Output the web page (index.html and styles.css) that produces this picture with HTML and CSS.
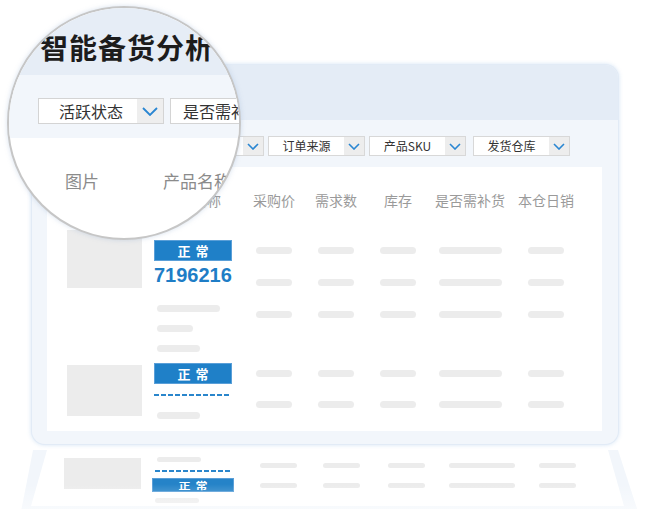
FILE: index.html
```html
<!DOCTYPE html>
<html lang="zh-CN">
<head>
<meta charset="utf-8">
<title>智能备货分析</title>
<link rel="stylesheet" href="styles.css">
</head>
<body>
<div class="scene">
  <div class="screen">
    <div class="screen-head"></div>
    <div class="screen-body">
      <div class="filters">
        <div class="filter"><span class="filter-label">活跃状态</span><span class="filter-arrow"><svg width="12" height="7" viewBox="0 0 12 7"><path d="M1 1l5 5 5-5" fill="none" stroke="#2a86d2" stroke-width="1.6"/></svg></span></div>
        <div class="filter"><span class="filter-label">是否需补货</span><span class="filter-arrow"><svg width="12" height="7" viewBox="0 0 12 7"><path d="M1 1l5 5 5-5" fill="none" stroke="#2a86d2" stroke-width="1.6"/></svg></span></div>
        <div class="filter"><span class="filter-label">订单来源</span><span class="filter-arrow"><svg width="12" height="7" viewBox="0 0 12 7"><path d="M1 1l5 5 5-5" fill="none" stroke="#2a86d2" stroke-width="1.6"/></svg></span></div>
        <div class="filter"><span class="filter-label">产品SKU</span><span class="filter-arrow"><svg width="12" height="7" viewBox="0 0 12 7"><path d="M1 1l5 5 5-5" fill="none" stroke="#2a86d2" stroke-width="1.6"/></svg></span></div>
        <div class="filter filter--last"><span class="filter-label">发货仓库</span><span class="filter-arrow"><svg width="12" height="7" viewBox="0 0 12 7"><path d="M1 1l5 5 5-5" fill="none" stroke="#2a86d2" stroke-width="1.6"/></svg></span></div>
      </div>
      <div class="table">
        <div class="trow thead">
          <div class="th th-img">图片</div>
          <div class="th th-name">产品名称</div>
          <div class="th">采购价</div>
          <div class="th">需求数</div>
          <div class="th">库存</div>
          <div class="th">是否需补货</div>
          <div class="th">本仓日销</div>
        </div>
        <div class="trow row-one">
          <div class="thumb thumb--tall"></div>
          <div class="product product--first">
            <div class="badge">正常</div>
            <div class="sku">7196216</div>
            <div class="pbar pbar--long pbar--after-sku"></div>
            <div class="pbar pbar--short pbar--next"></div>
            <div class="pbar pbar--mid pbar--next"></div>
          </div>
          <div class="bars bars--one"><i class="bar"></i><i class="bar"></i><i class="bar"></i></div>
          <div class="bars bars--one"><i class="bar"></i><i class="bar"></i><i class="bar"></i></div>
          <div class="bars bars--one"><i class="bar"></i><i class="bar"></i><i class="bar"></i></div>
          <div class="bars bars--one"><i class="bar bar--wide"></i><i class="bar bar--wide"></i><i class="bar bar--wide"></i></div>
          <div class="bars bars--one"><i class="bar"></i><i class="bar"></i><i class="bar"></i></div>
        </div>
        <div class="trow row-two">
          <div class="thumb thumb--short"></div>
          <div class="product">
            <div class="badge">正常</div>
            <div class="dash"></div>
            <div class="pbar pbar--mid pbar--after-dash"></div>
          </div>
          <div class="bars bars--two"><i class="bar"></i><i class="bar"></i></div>
          <div class="bars bars--two"><i class="bar"></i><i class="bar"></i></div>
          <div class="bars bars--two"><i class="bar"></i><i class="bar"></i></div>
          <div class="bars bars--two"><i class="bar bar--wide"></i><i class="bar bar--wide"></i></div>
          <div class="bars bars--two"><i class="bar"></i><i class="bar"></i></div>
        </div>
      </div>
    </div>
  </div>

  <div class="base">
    <div class="base-inner">
      <div class="base-thumb"></div>
      <div class="base-product">
        <div class="base-pbar"></div>
        <div class="base-dash"></div>
        <div class="base-badge"><span>正常</span></div>
        <div class="base-pbar base-pbar--last"></div>
      </div>
      <div class="base-bars"><i class="bbar"></i><i class="bbar"></i></div>
      <div class="base-bars"><i class="bbar"></i><i class="bbar"></i></div>
      <div class="base-bars"><i class="bbar"></i><i class="bbar"></i></div>
      <div class="base-bars"><i class="bbar bbar--wide"></i><i class="bbar bbar--wide"></i></div>
      <div class="base-bars"><i class="bbar"></i><i class="bbar"></i></div>
    </div>
  </div>

  <div class="magnifier">
    <div class="mag-head"><div class="mag-title">智能备货分析</div></div>
    <div class="mag-filters">
      <div class="mag-filter"><span class="mag-filter-label">活跃状态</span><span class="mag-filter-arrow"><svg width="16" height="9" viewBox="0 0 16 9"><path d="M1 1l7 7 7-7" fill="none" stroke="#2a86d2" stroke-width="1.8"/></svg></span></div>
      <div class="mag-filter"><span class="mag-filter-label">是否需补货</span><span class="mag-filter-arrow"><svg width="16" height="9" viewBox="0 0 16 9"><path d="M1 1l7 7 7-7" fill="none" stroke="#2a86d2" stroke-width="1.8"/></svg></span></div>
    </div>
    <div class="mag-table">
      <div class="mag-th-row"><span>图片</span><span>产品名称</span></div>
    </div>
  </div>
</div>
</body>
</html>
```

FILE: styles.css
```css
* { box-sizing: border-box; margin: 0; padding: 0; }
html, body { width: 654px; height: 509px; overflow: hidden; background: #fff; }
body {
  font-family: "Noto Sans CJK SC", "Noto Sans", "Liberation Sans", sans-serif;
  position: relative;
}
.scene { padding-top: 65px; }

/* ---------- screen ---------- */
.screen {
  margin-left: 32px;
  width: 586px;
  height: 379px;
  border-radius: 13px;
  background: #f2f6fb;
  overflow: hidden;
  display: flex;
  flex-direction: column;
  box-shadow: 0 0 0 1px #e2ebf6, 0 0 4px 1px rgba(165, 198, 232, 0.45);
}
.screen-head { height: 55px; background: #e4ecf6; flex: none; }
.screen-body {
  flex: 1;
  display: flex;
  flex-direction: column;
  padding: 16px 16px 13px 15px;
}
.filters { display: flex; gap: 4px; margin-left: 19px; height: 20px; flex: none; }
.filter {
  width: 97px;
  display: flex;
  background: #fff;
  border: 1px solid #d8d8d8;
}
.filter--last { margin-left: 3px; }
.filter-label {
  flex: 1;
  text-align: center;
  font-size: 12px;
  line-height: 18px;
  color: #333;
  white-space: nowrap;
}
.filter-arrow {
  width: 20px;
  background: #ededed;
  display: flex;
  align-items: center;
  justify-content: center;
}
.table {
  margin-top: 11px;
  flex: 1;
  background: #fff;
  padding-left: 20px;
  overflow: hidden;
}
.trow {
  display: grid;
  grid-template-columns: 87px 89px 62px 62px 62px 82px 70px;
  align-items: start;
}
.thead {
  padding-top: 24px;
  font-size: 14px;
  line-height: 18px;
  color: #9a9a9a;
}
.th { text-align: center; white-space: nowrap; }
.th-img { width: 75px; }
.th-name { width: 78px; }
.row-one { margin-top: 21px; }
.row-two { margin-top: 11px; }

.thumb { width: 75px; background: #ececec; }
.thumb--tall { height: 58px; }
.thumb--short { height: 51px; margin-top: 2px; }

.product { display: flex; flex-direction: column; align-items: flex-start; }
.product--first { padding-top: 10px; }
.badge {
  width: 78px;
  height: 21px;
  background: #1f80c8;
  border: 1px solid #5a9fd8;
  color: #fff;
  font-weight: 700;
  font-size: 13px;
  line-height: 19px;
  text-align: center;
  letter-spacing: 5px;
  padding-left: 5px;
}
.sku {
  font-family: "Liberation Sans", Arial, sans-serif;
  font-weight: 700;
  font-size: 20px;
  line-height: 20px;
  color: #1e7dc6;
  margin-top: 4px;
}
.pbar { height: 7px; border-radius: 4px; background: #ececec; margin-left: 3px; }
.pbar--long { width: 63px; }
.pbar--short { width: 36px; }
.pbar--mid { width: 43px; }
.pbar--after-sku { margin-top: 20px; }
.pbar--next { margin-top: 13px; }
.pbar--after-dash { margin-top: 16px; }
.dash {
  width: 77px;
  height: 2px;
  margin-top: 10px;
  background: repeating-linear-gradient(90deg, #2a86cc 0 5px, transparent 5px 7px);
}

.bars { display: flex; flex-direction: column; align-items: center; }
.bars--one { padding-top: 17px; gap: 25px; }
.bars--two { padding-top: 7px; gap: 24px; }
.bar { display: block; width: 36px; height: 7px; border-radius: 4px; background: #ececec; }
.bar--wide { width: 63px; }

/* ---------- base ---------- */
.base {
  position: relative;
  margin: 3px 0 0 20px;
  width: 618px;
  height: 62px;
  background: #f2f6fb;
  clip-path: polygon(13px 0, 598px 0, 618px 100%, 1px 100%);
}
.base::after {
  content: "";
  position: absolute;
  inset: 0;
  background: linear-gradient(rgba(255,255,255,0) 55%, rgba(255,255,255,0.5));
}
.base-inner {
  margin-top: 6px;
  height: 56px;
  background: #fff;
  clip-path: polygon(27px 0, 588px 0, 604px 100%, 11px 100%);
  padding-left: 44px;
  display: grid;
  grid-template-columns: 88px 94px 64px 63px 67px 84px 67px;
  align-items: start;
}
.base-thumb { width: 77px; height: 31px; margin-top: 8px; background: #ececec; }
.base-product { padding-top: 7px; display: flex; flex-direction: column; align-items: flex-start; }
.base-pbar { width: 44px; height: 5px; border-radius: 3px; background: #ececec; margin-left: 5px; }
.base-pbar--last { margin-top: 6px; margin-left: 3px; }
.base-dash {
  width: 77px;
  height: 2px;
  margin: 8px 0 0 3px;
  background: repeating-linear-gradient(90deg, #2a86cc 0 5px, transparent 5px 7px);
}
.base-badge {
  margin-top: 6px;
  width: 82px;
  height: 14px;
  background: #2583c8;
  border: 1px solid #5a9fd8;
  color: #fff;
  font-weight: 700;
  font-size: 12px;
  line-height: 12px;
  text-align: center;
  letter-spacing: 5px;
  padding-left: 5px;
  overflow: hidden;
}
.base-badge span { display: inline-block; transform: scaleY(0.8); }
.base-bars { padding-top: 13px; display: flex; flex-direction: column; align-items: center; gap: 15px; }
.bbar { display: block; width: 37px; height: 5px; border-radius: 3px; background: #ececec; }
.bbar--wide { width: 66px; }

/* ---------- magnifier ---------- */
.magnifier {
  position: absolute;
  left: 7px;
  top: 6px;
  width: 234px;
  height: 234px;
  border-radius: 50%;
  border: 2px solid #c6c6c6;
  overflow: hidden;
  background: #fff;
  box-shadow: 0 0 5px rgba(140, 170, 205, 0.35);
}
.mag-head { height: 67px; background: #e6edf6; padding: 25px 0 0 31px; }
.mag-title {
  font-size: 28px;
  line-height: 28px;
  font-weight: 700;
  color: #1c1c1c;
  letter-spacing: 1px;
  white-space: nowrap;
}
.mag-filters {
  height: 63px;
  background: #f2f6fb;
  padding: 23px 0 0 29px;
  display: flex;
  gap: 6px;
}
.mag-filter {
  flex: none;
  width: 126px;
  height: 26px;
  display: flex;
  border: 1px solid #d4d4d4;
  background: #fff;
}
.mag-filter-label {
  flex: 1;
  text-align: center;
  padding-left: 6px;
  font-size: 16px;
  line-height: 24px;
  color: #333;
  white-space: nowrap;
  overflow: hidden;
}
.mag-filter-arrow {
  width: 26px;
  background: #eeeeee;
  display: flex;
  align-items: center;
  justify-content: center;
}
.mag-th-row {
  padding: 33px 0 0 56px;
  display: flex;
  gap: 64px;
  font-size: 17px;
  line-height: 20px;
  color: #8b8b8b;
  white-space: nowrap;
}
```
